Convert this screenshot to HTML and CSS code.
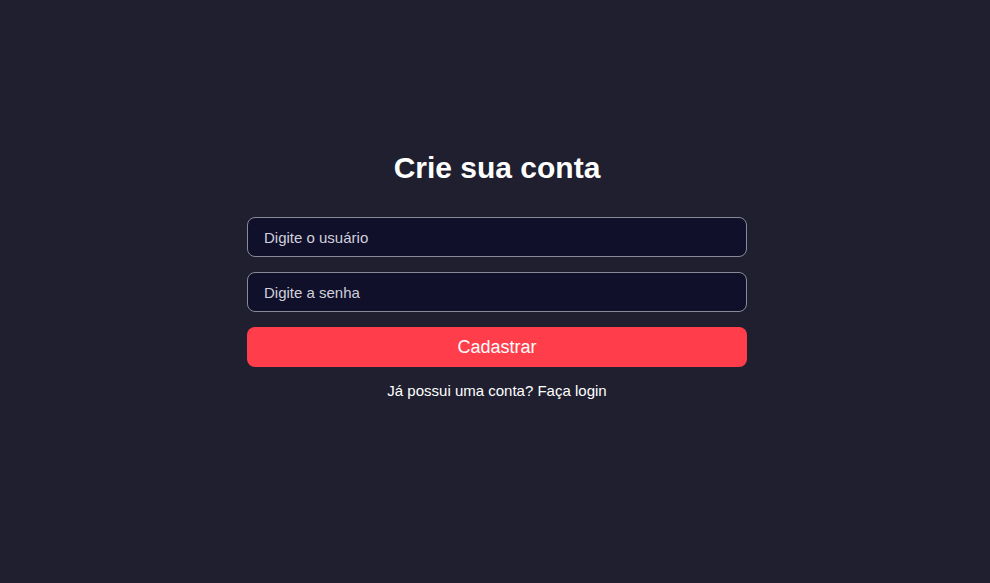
FILE: index.html
```html
<!DOCTYPE html>
<html lang="pt-BR">
<head>
<meta charset="utf-8">
<title>Crie sua conta</title>
<link rel="stylesheet" href="styles.css">
</head>
<body>
<main class="page">
  <section class="card">
    <h1 class="title">Crie sua conta</h1>
    <form class="form">
      <input class="field" type="text" placeholder="Digite o usuário">
      <input class="field" type="password" placeholder="Digite a senha">
      <button class="btn" type="button">Cadastrar</button>
    </form>
    <p class="switch">Já possui uma conta? <a class="link" href="#">Faça login</a></p>
  </section>
</main>
</body>
</html>
```

FILE: styles.css
```css
* { box-sizing: border-box; }
html, body { margin: 0; padding: 0; }
body {
  background: #1f1f2f;
  font-family: "Liberation Sans", Arial, sans-serif;
  color: #fff;
}
.page {
  min-height: 100vh;
  display: flex;
  align-items: center;
  justify-content: center;
  padding-left: 4px;
  padding-bottom: 36px;
}
.card {
  width: 500px;
  display: flex;
  flex-direction: column;
  align-items: stretch;
}
.title {
  margin: 2px 0 32px;
  font-size: 30px;
  font-weight: 700;
  line-height: 35px;
  text-align: center;
  color: #fff;
}
.form {
  display: flex;
  flex-direction: column;
  gap: 15px;
}
.field {
  height: 40px;
  padding: 0 16px;
  border: 1px solid #8a8a96;
  border-radius: 8px;
  background: #10102a;
  color: #fff;
  font-family: inherit;
  font-size: 15px;
  outline: none;
}
.field::placeholder { color: #d0d0dc; opacity: 1; }
.btn {
  height: 40px;
  border: none;
  border-radius: 8px;
  background: #ff3d4b;
  color: #fff;
  font-family: inherit;
  font-size: 18px;
  cursor: pointer;
}
.switch {
  margin: 15px 0 0;
  font-size: 15px;
  line-height: 17px;
  text-align: center;
  color: #fff;
}
.link { color: #fff; text-decoration: none; }
```
